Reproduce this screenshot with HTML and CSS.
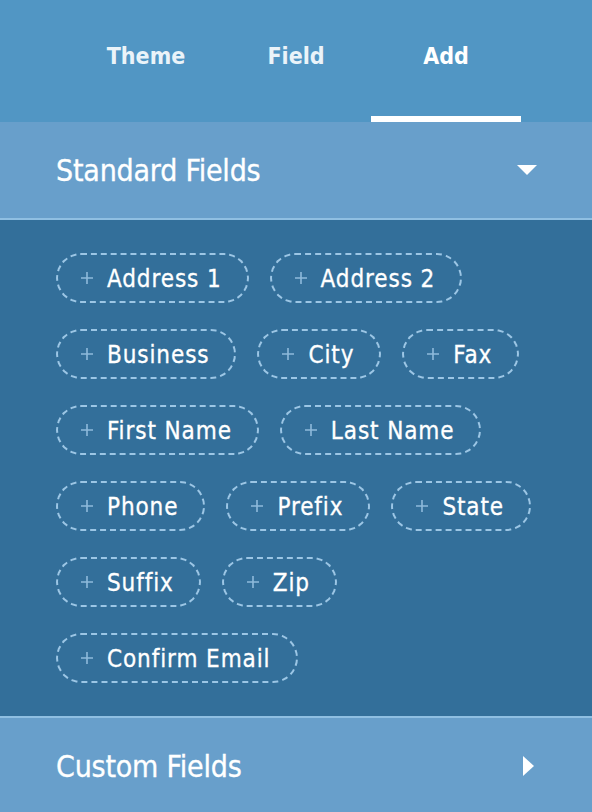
FILE: index.html
```html
<!DOCTYPE html>
<html lang="en">
<head>
  <meta charset="UTF-8" />
  <meta name="viewport" content="width=device-width, initial-scale=1.0"/>
  <title>Form Builder</title>
  <link rel="stylesheet" href="styles.css">
</head>
<body>
  <nav class="tabs">
    <a class="tab">Theme</a>
    <a class="tab">Field</a>
    <a class="tab active">Add</a>
  </nav>

  <section class="group open">
    <header class="group-head">
      <span>Standard Fields</span>
      <span class="caret down"></span>
    </header>
    <div class="chips">
      <div class="row">
        <button class="chip"><svg viewBox="0 0 14 14"><path d="M7 1v12M1 7h12"/></svg>Address 1</button>
        <button class="chip"><svg viewBox="0 0 14 14"><path d="M7 1v12M1 7h12"/></svg>Address 2</button>
      </div>
      <div class="row">
        <button class="chip"><svg viewBox="0 0 14 14"><path d="M7 1v12M1 7h12"/></svg>Business</button>
        <button class="chip"><svg viewBox="0 0 14 14"><path d="M7 1v12M1 7h12"/></svg>City</button>
        <button class="chip"><svg viewBox="0 0 14 14"><path d="M7 1v12M1 7h12"/></svg>Fax</button>
      </div>
      <div class="row">
        <button class="chip"><svg viewBox="0 0 14 14"><path d="M7 1v12M1 7h12"/></svg>First Name</button>
        <button class="chip"><svg viewBox="0 0 14 14"><path d="M7 1v12M1 7h12"/></svg>Last Name</button>
      </div>
      <div class="row">
        <button class="chip"><svg viewBox="0 0 14 14"><path d="M7 1v12M1 7h12"/></svg>Phone</button>
        <button class="chip"><svg viewBox="0 0 14 14"><path d="M7 1v12M1 7h12"/></svg>Prefix</button>
        <button class="chip"><svg viewBox="0 0 14 14"><path d="M7 1v12M1 7h12"/></svg>State</button>
      </div>
      <div class="row">
        <button class="chip"><svg viewBox="0 0 14 14"><path d="M7 1v12M1 7h12"/></svg>Suffix</button>
        <button class="chip"><svg viewBox="0 0 14 14"><path d="M7 1v12M1 7h12"/></svg>Zip</button>
      </div>
      <div class="row">
        <button class="chip"><svg viewBox="0 0 14 14"><path d="M7 1v12M1 7h12"/></svg>Confirm Email</button>
      </div>
    </div>
  </section>

  <section class="group">
    <header class="group-head">
      <span>Custom Fields</span>
      <span class="caret right"></span>
    </header>
  </section>
</body>
</html>
```

FILE: styles.css
```css
body {
  margin: 0;
  font-family: "DejaVu Sans Condensed", "DejaVu Sans", "Lucida Grande", sans-serif;
  font-stretch: condensed;
  background: #336f9a;
  color: #fff;
  width: 592px;
  height: 812px;
  overflow: hidden;
}

.tabs {
  display: flex;
  justify-content: center;
  height: 122px;
  background: #5196c4;
}

.tab {
  width: 150px;
  box-sizing: border-box;
  padding-top: 43px;
  text-align: center;
  font-size: 23px;
  font-weight: bold;
  color: #eaf3f9;
}

.tab.active {
  color: #fff;
  border-bottom: 6px solid #fff;
}

.group-head {
  display: flex;
  align-items: center;
  justify-content: space-between;
  height: 96px;
  padding: 0 55px 0 56px;
  background: #689fcb;
  font-size: 30px;
  letter-spacing: -0.2px;
  -webkit-text-stroke: 0.3px #fff;
}

.group.open .group-head {
  border-bottom: 2px solid #8fbfe2;
}

.group + .group .group-head {
  border-top: 2px solid #8fbfe2;
}

.caret {
  width: 0;
  height: 0;
}

.caret.down {
  border-left: 10px solid transparent;
  border-right: 10px solid transparent;
  border-top: 10px solid #fff;
}

.caret.right {
  margin-right: 3px;
  border-top: 10px solid transparent;
  border-bottom: 10px solid transparent;
  border-left: 11px solid #fff;
}

.chips {
  display: flex;
  flex-direction: column;
  gap: 26px;
  padding: 33px 56px;
}

.row {
  display: flex;
  gap: 21px;
}

.chip {
  display: inline-flex;
  align-items: center;
  gap: 13px;
  height: 50px;
  box-sizing: border-box;
  padding: 2px 25px 0 22px;
  border: 2px dashed #9cc6e5;
  border-radius: 25px;
  background: transparent;
  color: #fff;
  font-family: inherit;
  font-stretch: inherit;
  font-size: 24px;
  letter-spacing: 0.9px;
  -webkit-text-stroke: 0.3px #fff;
  cursor: pointer;
}

.chip svg {
  width: 14px;
  height: 14px;
  margin-top: -2px;
  stroke: #8ebadb;
  stroke-width: 1.6;
  fill: none;
}
```
